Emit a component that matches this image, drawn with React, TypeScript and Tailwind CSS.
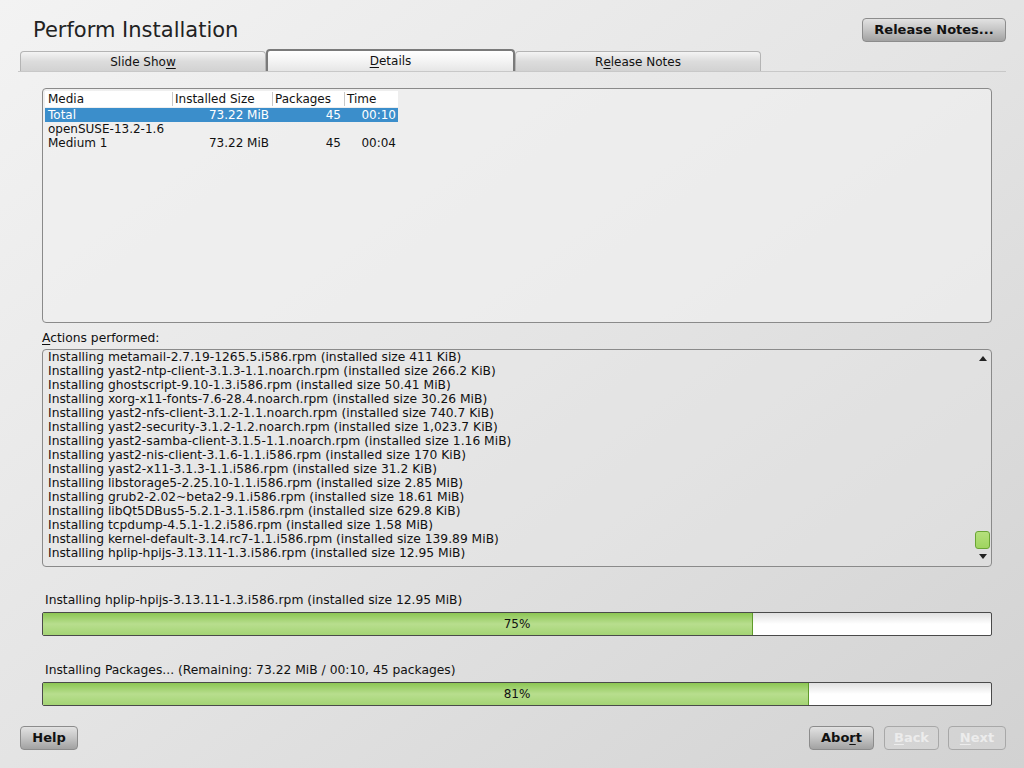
import clsx from "clsx";

const FONT = { fontFamily: '"DejaVu Sans", "Liberation Sans", sans-serif' };

const LOG_LINES = [
  "Installing metamail-2.7.19-1265.5.i586.rpm (installed size 411 KiB)",
  "Installing yast2-ntp-client-3.1.3-1.1.noarch.rpm (installed size 266.2 KiB)",
  "Installing ghostscript-9.10-1.3.i586.rpm (installed size 50.41 MiB)",
  "Installing xorg-x11-fonts-7.6-28.4.noarch.rpm (installed size 30.26 MiB)",
  "Installing yast2-nfs-client-3.1.2-1.1.noarch.rpm (installed size 740.7 KiB)",
  "Installing yast2-security-3.1.2-1.2.noarch.rpm (installed size 1,023.7 KiB)",
  "Installing yast2-samba-client-3.1.5-1.1.noarch.rpm (installed size 1.16 MiB)",
  "Installing yast2-nis-client-3.1.6-1.1.i586.rpm (installed size 170 KiB)",
  "Installing yast2-x11-3.1.3-1.1.i586.rpm (installed size 31.2 KiB)",
  "Installing libstorage5-2.25.10-1.1.i586.rpm (installed size 2.85 MiB)",
  "Installing grub2-2.02~beta2-9.1.i586.rpm (installed size 18.61 MiB)",
  "Installing libQt5DBus5-5.2.1-3.1.i586.rpm (installed size 629.8 KiB)",
  "Installing tcpdump-4.5.1-1.2.i586.rpm (installed size 1.58 MiB)",
  "Installing kernel-default-3.14.rc7-1.1.i586.rpm (installed size 139.89 MiB)",
  "Installing hplip-hpijs-3.13.11-1.3.i586.rpm (installed size 12.95 MiB)",
];

const ROWS = [
  { media: "Total", size: "73.22 MiB", pkgs: "45", time: "00:10", selected: true },
  { media: "openSUSE-13.2-1.6", size: "", pkgs: "", time: "" },
  { media: "Medium 1", size: "73.22 MiB", pkgs: "45", time: "00:04" },
];

const Tab = ({ label, u, active }: { label: string; u: number; active?: boolean }) => (
  <div
    className={clsx(
      "flex h-[20px] items-center justify-center rounded-t-[4px] text-[12px] text-[#111]",
      active
        ? "-mt-[2px] h-[22px] w-[249px] border-2 border-b-0 border-[#7a7a7a] bg-gradient-to-b from-white via-[#f4f4f4] to-[#e6e6e6]"
        : "w-[246px] border border-b-0 border-[#b4b4b4] bg-gradient-to-b from-[#f4f4f4] via-[#dcdcdc] to-[#d2d2d2]",
    )}
  >
    {label.slice(0, u)}
    <span className="underline underline-offset-2">{label[u]}</span>
    {label.slice(u + 1)}
  </div>
);

const Button = ({
  label,
  u,
  disabled,
  className,
}: {
  label: string;
  u?: number;
  disabled?: boolean;
  className?: string;
}) => (
  <button
    className={clsx(
      "flex h-[24px] items-center justify-center rounded-[4px] border text-[13px] font-bold",
      disabled
        ? "border-[#a8a8a8] bg-transparent text-[#ececec]"
        : "border-[#8c8c8c] bg-gradient-to-b from-[#e2e2e2] via-[#c4c4c4] to-[#a2a2a2] text-[#111]",
      className,
    )}
  >
    {u === undefined ? (
      label
    ) : (
      <>
        {label.slice(0, u)}
        <span className="underline underline-offset-2">{label[u]}</span>
        {label.slice(u + 1)}
      </>
    )}
  </button>
);

const Progress = ({ value }: { value: number }) => (
  <div className="relative h-[24px] w-[950px] overflow-hidden rounded-[2px] border border-[#4a4a4a] bg-gradient-to-b from-[#e0e0e0] via-white to-white">
    <div
      className="h-full border-r border-[#5f9a2a] bg-gradient-to-b from-[#8cc652] via-[#b8de8e] to-[#a4d474]"
      style={{ width: `${value}%` }}
    />
    <div className="absolute inset-0 flex items-center justify-center text-[12px] text-[#111]">
      {Math.round(value)}%
    </div>
  </div>
);

export default function App() {
  return (
    <div
      className="flex h-[768px] w-[1024px] flex-col overflow-hidden bg-gradient-to-br from-[#f3f3f3] via-[#e4e4e4] to-[#d2d2d2] text-[#111]"
      style={FONT}
    >
      {/* header */}
      <div className="flex items-start justify-between pl-[33px] pr-[18px] pt-[18px]">
        <h1 className="text-[21px] leading-[24px] text-[#222]">Perform Installation</h1>
        <Button label="Release Notes..." className="w-[144px]" />
      </div>

      {/* tabs */}
      <div className="mx-[18px] mt-[9px] flex border-b border-[#c8c8c8] pl-[2px]">
        <Tab label="Slide Show" u={9} />
        <Tab label="Details" u={0} active />
        <Tab label="Release Notes" u={1} />
      </div>

      <div className="flex flex-col pl-[42px]">
        {/* media table */}
        <div className="mt-[16px] h-[235px] w-[950px] rounded-[4px] border border-[#8a8a8a] bg-[#efefef]/70 pl-[2px] pt-[2px]">
          <div className="flex h-[16px] w-[353px] items-center bg-white text-[12px] leading-[14px]">
            <div className="w-[128px] border-r border-[#c8c8c8] pl-[3px]">Media</div>
            <div className="w-[100px] border-r border-[#c8c8c8] pl-[2px]">Installed Size</div>
            <div className="w-[72px] border-r border-[#c8c8c8] pl-[2px]">Packages</div>
            <div className="w-[53px] pl-[2px]">Time</div>
          </div>
          <div className="mt-[1px] flex flex-col text-[12px] leading-[14px]">
            {ROWS.map((r) => (
              <div
                key={r.media}
                className={clsx(
                  "flex h-[14px] w-[353px] items-center",
                  r.selected ? "bg-[#3b8ecb] text-white" : "text-[#111]",
                )}
              >
                <div className="w-[128px] whitespace-nowrap pl-[3px]">{r.media}</div>
                <div className="w-[96px] text-right">{r.size}</div>
                <div className="w-[72px] text-right">{r.pkgs}</div>
                <div className="w-[55px] text-right">{r.time}</div>
              </div>
            ))}
          </div>
        </div>

        {/* actions */}
        <div className="mt-[8px] text-[12.3px] leading-[14px]">
          <span className="underline underline-offset-2">A</span>ctions performed:
        </div>
        <div className="mt-[4px] flex h-[218px] w-[950px] rounded-[4px] border border-[#8a8a8a] bg-[#e8e8e8]/40">
          <div className="flex flex-1 flex-col pl-[5px] text-[12.3px] leading-[14px]">
            {LOG_LINES.map((l) => (
              <div key={l} className="whitespace-nowrap">
                {l}
              </div>
            ))}
          </div>
          <div className="flex w-[18px] flex-col items-center pb-[7px] pt-[6px]">
            <svg width="8" height="5" viewBox="0 0 8 5" className="ml-[2px]">
              <path d="M4 0 L8 5 L0 5 Z" fill="#222" />
            </svg>
            <div className="flex-1" />
            <div className="mb-[5px] h-[18px] w-[15px] rounded-[3px] border border-[#6aa534] bg-gradient-to-b from-[#b5e07c] to-[#9fd45f]" />
            <svg width="8" height="5" viewBox="0 0 8 5" className="ml-[2px]">
              <path d="M0 0 L8 0 L4 5 Z" fill="#222" />
            </svg>
          </div>
        </div>

        {/* progress */}
        <div className="mt-[26px] pl-[3px] text-[12.3px] leading-[14px]">
          Installing hplip-hpijs-3.13.11-1.3.i586.rpm (installed size 12.95 MiB)
        </div>
        <div className="mt-[5px]">
          <Progress value={74.9} />
        </div>
        <div className="mt-[27px] pl-[3px] text-[12.3px] leading-[14px]">
          Installing Packages... (Remaining: 73.22 MiB / 00:10, 45 packages)
        </div>
        <div className="mt-[5px]">
          <Progress value={80.8} />
        </div>
      </div>

      {/* footer */}
      <div className="mt-[20px] flex items-center pl-[20px] pr-[18px]">
        <Button label="Help" className="w-[58px]" />
        <div className="flex-1" />
        <Button label="Abort" u={3} className="w-[65px]" />
        <Button label="Back" u={0} disabled className="ml-[10px] w-[55px]" />
        <Button label="Next" u={0} disabled className="ml-[9px] w-[58px]" />
      </div>
    </div>
  );
}
